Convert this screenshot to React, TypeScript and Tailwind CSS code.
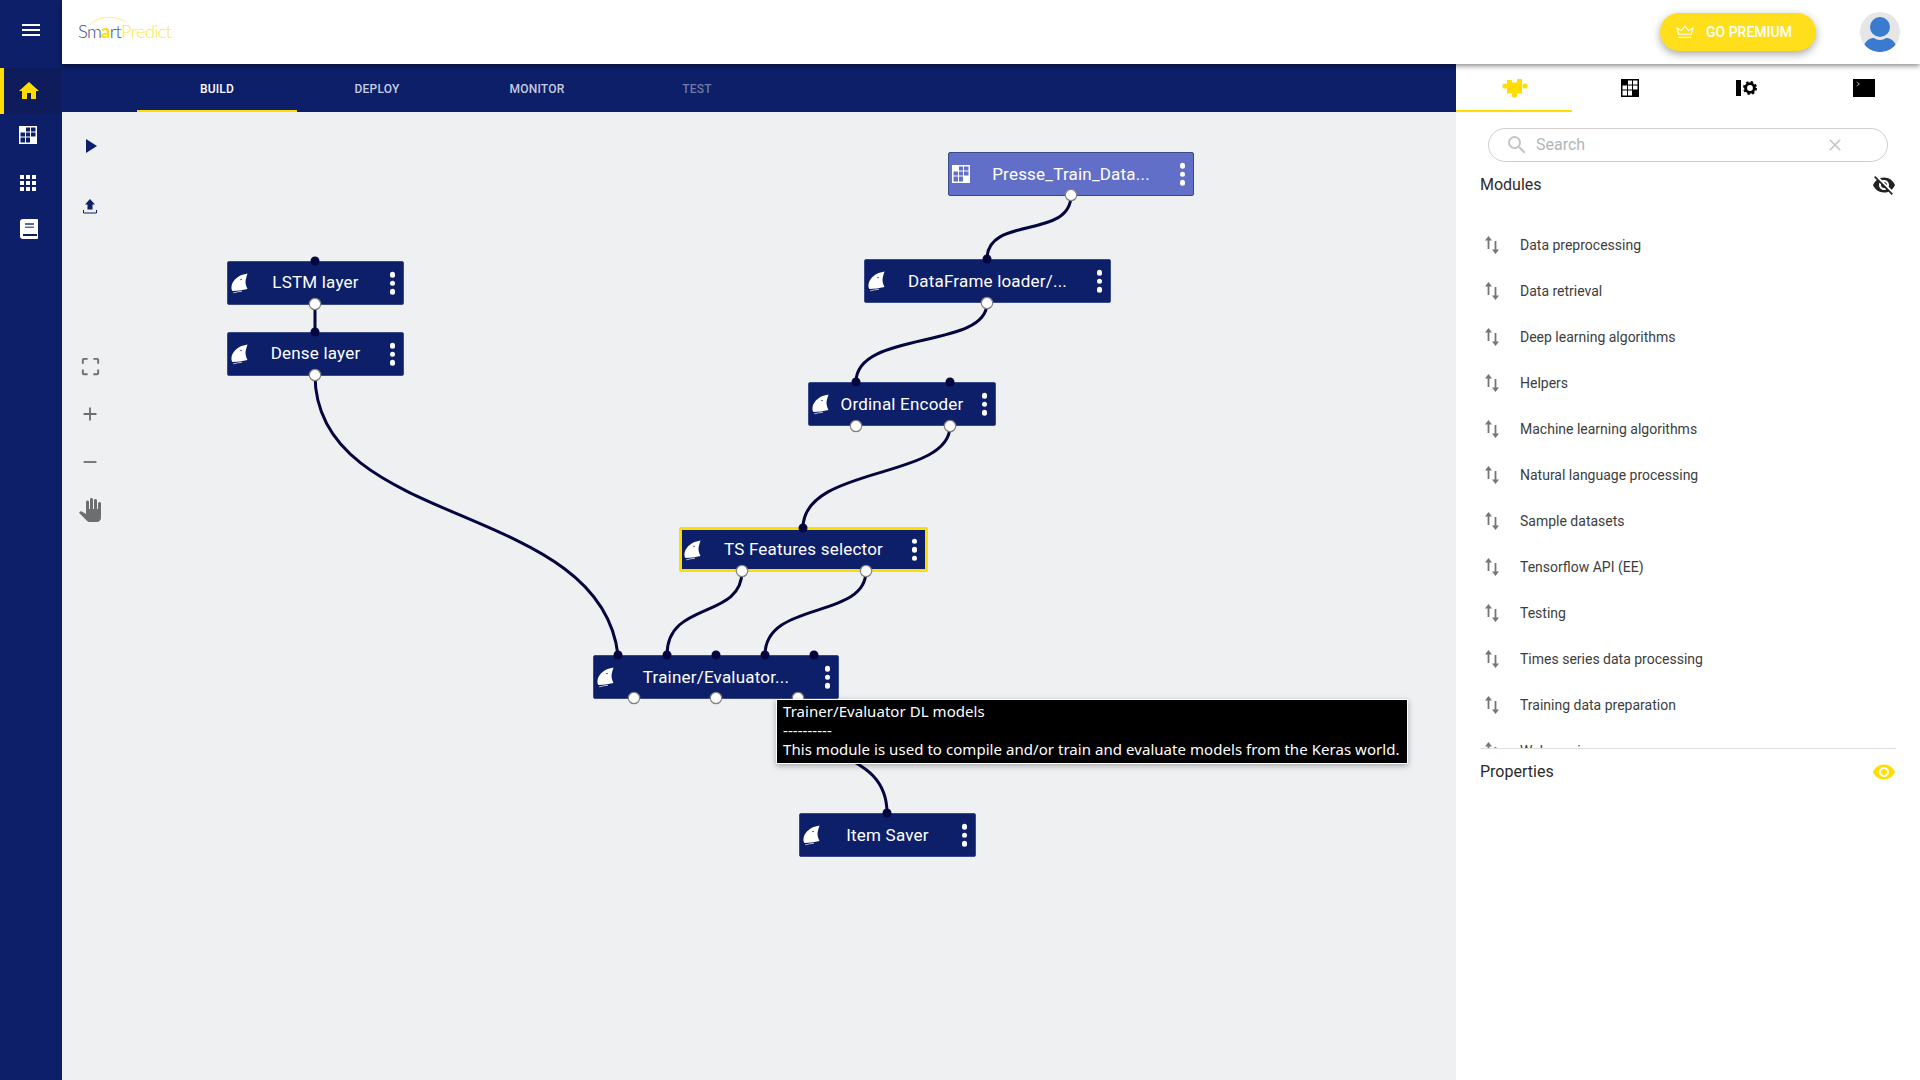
import React from "react";
import {
  MdMenu,
  MdHome,
  MdApps,
  MdPlayArrow,
  MdCropFree,
  MdAdd,
  MdRemove,
  MdPanTool,
  MdSearch,
  MdClose,
  MdVisibility,
  MdVisibilityOff,
} from "react-icons/md";

const modules = [
  "Data preprocessing",
  "Data retrieval",
  "Deep learning algorithms",
  "Helpers",
  "Machine learning algorithms",
  "Natural language processing",
  "Sample datasets",
  "Tensorflow API (EE)",
  "Testing",
  "Times series data processing",
  "Training data preparation",
  "Web services",
];

const nodes = [
  { label: "LSTM layer", pos: "left-[165px] top-[149px] w-[177px] h-[44px]" },
  { label: "Dense layer", pos: "left-[165px] top-[220px] w-[177px] h-[44px]" },
  { label: "Presse_Train_Data...", pos: "left-[886px] top-[40px] w-[246px] h-[44px] pt-[2px]", dataset: true },
  { label: "DataFrame loader/...", pos: "left-[802px] top-[147px] w-[247px] h-[44px] pt-[1px]" },
  { label: "Ordinal Encoder", pos: "left-[746px] top-[270px] w-[188px] h-[44px] pt-[2px]" },
  { label: "TS Features selector", pos: "left-[617px] top-[415px] w-[249px] h-[45px]", selected: true },
  { label: "Trainer/Evaluator...", pos: "left-[531px] top-[543px] w-[246px] h-[44px] pt-[2px]" },
  { label: "Item Saver", pos: "left-[737px] top-[701px] w-[177px] h-[44px] pt-[2px]" },
];

const edges = [
  "M315 304 L315 332",
  "M315 375 C315 530 600 500 618 655",
  "M1071 195 C1071 240 987 215 987 259",
  "M987 303 C987 350 856 330 856 382",
  "M950 426 C950 480 803 465 803 528",
  "M742 571 C742 620 667 600 667 655",
  "M866 571 C866 620 765 600 765 655",
  "M798 698 C798 765 887 745 887 813",
];

const inputs = [
  [315, 261], [315, 332], [987, 259], [856, 382], [950, 382], [803, 528],
  [618, 655], [667, 655], [716, 655], [765, 655], [814, 655], [887, 813],
];

const outputs = [
  [315, 304], [315, 375], [1071, 195], [987, 303], [856, 426], [950, 426],
  [742, 571], [866, 571], [634, 698], [716, 698], [798, 698],
];

function TableIcon({ className, cell }: { className?: string; cell: string }) {
  return (
    <svg viewBox="0 0 18 18" className={className}>
      <rect width="18" height="18" fill="currentColor" />
      <g fill={cell}>
        <rect x="7" y="1.5" width="4" height="4" />
        <rect x="12" y="1.5" width="4.5" height="4" />
        <rect x="1.5" y="6.5" width="4.5" height="4" />
        <rect x="7" y="6.5" width="4" height="4" />
        <rect x="12" y="6.5" width="4.5" height="4" />
        <rect x="1.5" y="11.5" width="4.5" height="5" />
        <rect x="7" y="11.5" width="4" height="5" />
      </g>
    </svg>
  );
}

function FinIcon() {
  return (
    <svg viewBox="0 0 17 21" className="w-[17px] h-[21px]">
      <path
        fill="#fff"
        d="M16.5 1 C14 2 11 2 8.5 3.5 C4 6 1 10 0.5 14 C0.3 16 0.6 17.5 1.5 18.5 C6 18.5 11.5 17.5 16.5 16.5 C15 13.5 14.2 10.5 14.6 8 C15 5.5 15.8 3.5 16.5 1 Z"
      />
      <circle cx="10" cy="7" r="0.7" fill="#0d1f69" />
      <path stroke="#fff" strokeWidth="0.7" fill="none" d="M2 20.5 C5 19.5 8 19 11 18.8" />
    </svg>
  );
}

function PuzzleIcon() {
  return (
    <svg viewBox="0 0 26 20" className="w-[26px] h-[20px]" fill="#ffdd00">
      <path d="M5 2 H10 V4.5 H15 V1 H20 V7 H5 Z" />
      <rect x="5" y="6" width="15" height="9.5" />
      <circle cx="3" cy="8" r="2.6" />
      <circle cx="23" cy="8" r="2.6" />
      <circle cx="12.5" cy="17" r="2.6" />
    </svg>
  );
}

function Kebab() {
  return (
    <div className="flex flex-col gap-[3px] absolute right-[8px] top-1/2 -translate-y-1/2">
      <span className="w-[5.5px] h-[5.5px] rounded-full bg-white" />
      <span className="w-[5.5px] h-[5.5px] rounded-full bg-white" />
      <span className="w-[5.5px] h-[5.5px] rounded-full bg-white" />
    </div>
  );
}

function SortIcon() {
  return (
    <svg viewBox="0 0 16 20" className="w-[16px] h-[20px] text-[#757575]" fill="currentColor">
      <path d="M4.5 1 L8 5.5 H5.4 V14 H3.6 V5.5 H1 Z" />
      <path d="M11.5 19 L15 14.5 H12.4 V6 H10.6 V14.5 H8 Z" />
    </svg>
  );
}

function Sidebar() {
  return (
    <aside className="w-[62px] shrink-0 bg-[#0d1f69] flex flex-col items-stretch text-white">
      <div className="h-[68px] flex items-center justify-center pb-2">
        <MdMenu className="w-[24px] h-[24px]" />
      </div>
      <div className="h-[46px] flex items-center justify-center bg-[#0e1c5c] border-l-4 border-[#ffdd00] pr-[8px]">
        <MdHome className="w-[24px] h-[24px] text-[#ffdd00]" />
      </div>
      <div className="h-[42px] flex items-center justify-center pr-[6px]">
        <TableIcon className="w-[18px] h-[18px] text-white" cell="#0d1f69" />
      </div>
      <div className="h-[54px] flex items-center justify-center pr-[6px]">
        <MdApps className="w-[24px] h-[24px]" />
      </div>
      <div className="h-[38px] flex items-center justify-center pr-[4px]">
        <svg viewBox="0 0 18 20" className="w-[18px] h-[20px]">
          <path fill="#fff" d="M3 0 H17 Q18 0 18 1 V19 Q18 20 17 20 H3 Q0 20 0 17 V3 Q0 0 3 0 Z" />
          <path fill="#5a6aa0" d="M5 4 H14 V6 H5 Z M5 7.5 H14 V9 H5 Z" />
          <path fill="#0d1f69" d="M3 15 H17 V17 H3 Z" />
        </svg>
      </div>
    </aside>
  );
}

function TopBar() {
  return (
    <header className="h-[64px] shrink-0 bg-white flex items-center justify-between relative z-10 shadow-[0_2px_5px_rgba(0,0,0,0.45)]">
      <div className="relative ml-[16px] font-['Lato',sans-serif] font-light text-[18.5px] leading-none tracking-[-0.75px] mt-[-1px]">
        <svg viewBox="0 0 44 10" className="absolute left-[12px] -top-[7px] w-[40px] h-[10px]">
          <path d="M1 9 C10 1 28 -1 40 8" fill="none" stroke="#ffe53b" strokeWidth="0.8" />
        </svg>
        <span className="text-[#3d4a85]">Sm</span>
        <span className="text-[#ffdd00] font-bold">a</span>
        <span className="text-[#3d4a85]">rt</span>
        <span className="text-[#ffe53b]">Predict</span>
      </div>
      <div className="flex items-center">
        <button className="w-[156px] h-[38px] mr-[44px] rounded-full bg-[#ffdf1b] text-white text-[14px] font-medium font-['Roboto',sans-serif] flex items-center pl-[16px] gap-[12px] shadow-[0_3px_8px_rgba(0,0,0,0.35)]">
          <svg viewBox="0 0 20 15" className="w-[18px] h-[14px]" fill="none" stroke="#fff" strokeWidth="1.2">
            <path d="M3 10 L1 3 L6 6 L10 1 L14 6 L19 3 L17 10 Z" />
            <path d="M3 13.5 H17" />
          </svg>
          GO PREMIUM
        </button>
        <div className="w-[40px] h-[40px] mr-[20px] rounded-full bg-[#e6e6e6] overflow-hidden">
          <svg viewBox="0 0 40 40" className="w-full h-full">
            <circle cx="20" cy="15" r="10" fill="#3a7bd0" />
            <path d="M4 33 C7 27 11 26 14 26 C17 28.5 23 28.5 26 26 C29 26 33 27 36 33 C32 38 26 40 20 40 C14 40 8 38 4 33 Z" fill="#3a7bd0" />
          </svg>
        </div>
      </div>
    </header>
  );
}

function TabBar() {
  const tabs = ["BUILD", "DEPLOY", "MONITOR", "TEST"];
  return (
    <nav className="h-[48px] shrink-0 bg-[#0d1f69] flex pl-[75px]">
      {tabs.map((t, i) => (
        <div
          key={t}
          className={`w-[160px] flex items-center justify-center text-[12px] font-medium tracking-[0.2px] ${
            i === 0
              ? "text-white border-b-2 border-[#ffdd00] pt-[3px]"
              : i === 3
              ? "text-[#6f7aa8] pt-[1px]"
              : "text-[#c6cbe0] pt-[1px]"
          }`}
        >
          {t}
        </div>
      ))}
    </nav>
  );
}

function Toolbar() {
  return (
    <div className="absolute left-0 top-0 w-[56px] flex flex-col items-center pt-[10px]">
      <div className="h-[48px] flex items-center justify-center">
        <MdPlayArrow className="w-[24px] h-[24px] text-[#0d1f69]" />
      </div>
      <div className="h-[48px] mt-[12px] flex items-center justify-center">
        <svg viewBox="0 0 16 16" className="w-[16px] h-[16px] -ml-[1px]">
          <path fill="#0d1f69" d="M8 1 L13 6.5 H10.5 V11.5 H5.5 V6.5 H3 Z" />
          <path fill="none" stroke="#0d1f69" strokeWidth="1" d="M1.5 12 V15 H14.5 V12" />
        </svg>
      </div>
      <div className="h-[48px] mt-[112px] flex items-center justify-center">
        <MdCropFree className="w-[23px] h-[23px] text-[#6e6e6e]" />
      </div>
      <div className="h-[48px] flex items-center justify-center">
        <MdAdd className="w-[22px] h-[22px] text-[#6e6e6e]" />
      </div>
      <div className="h-[48px] flex items-center justify-center">
        <MdRemove className="w-[22px] h-[22px] text-[#6e6e6e]" />
      </div>
      <div className="h-[48px] flex items-center justify-center">
        <MdPanTool className="w-[24px] h-[24px] text-[#6e6e6e]" />
      </div>
    </div>
  );
}

function Canvas() {
  return (
    <main className="relative flex-1 bg-[#eff0f2] overflow-hidden font-['Roboto',sans-serif]">
      <Toolbar />
      {nodes.map((n) => (
        <div
          key={n.label}
          className={`absolute ${n.pos} rounded-[2px] flex items-center justify-center text-white text-[17px] tracking-[0.2px] ${
            n.dataset ? "bg-[#626fc9]" : "bg-[#0d1f69]"
          } ${n.selected ? "border-[3px] border-[#ffdd00]" : "border border-[#3a4a88]"}`}
        >
          <div className={`absolute top-1/2 -translate-y-1/2 flex ${n.selected ? "left-[2px]" : "left-[3px]"}`}>
            {n.dataset ? <TableIcon className="w-[18px] h-[18px] text-white" cell="#626fc9" /> : <FinIcon />}
          </div>
          {n.label}
          <Kebab />
        </div>
      ))}
      <svg viewBox="62 112 1394 968" className="absolute inset-0 w-full h-full pointer-events-none">
        {edges.map((d) => (
          <path key={d} d={d} fill="none" stroke="#05053f" strokeWidth="3" />
        ))}
        {inputs.map(([x, y]) => (
          <circle key={`${x}-${y}`} cx={x} cy={y} r="4.5" fill="#05053f" />
        ))}
        {outputs.map(([x, y]) => (
          <circle key={`${x}-${y}`} cx={x} cy={y} r="5.7" fill="#fff" stroke="#808080" strokeWidth="1.2" />
        ))}
      </svg>
      <div className="absolute left-[714px] top-[587px] w-[632px] h-[65px] bg-black border border-white shadow-[0_2px_6px_rgba(0,0,0,0.3)] text-white text-[15px] leading-[19px] tracking-[0.05px] font-['Noto_Sans',sans-serif] px-[6px] pt-[2px] whitespace-nowrap">
        <div>Trainer/Evaluator DL models</div>
        <div>----------</div>
        <div>This module is used to compile and/or train and evaluate models from the Keras world.</div>
      </div>
    </main>
  );
}

function Panel() {
  return (
    <aside className="w-[464px] shrink-0 bg-white flex flex-col font-['Roboto',sans-serif]">
      <div className="h-[48px] shrink-0 grid grid-cols-4">
        <div className="flex items-center justify-center border-b-2 border-[#ffdd00] pt-[2px] pl-[2px]">
          <PuzzleIcon />
        </div>
        <div className="flex items-center justify-center">
          <TableIcon className="w-[20px] h-[18px] text-black" cell="#fff" />
        </div>
        <div className="flex items-center justify-center gap-[2px]">
          <span className="w-[5px] h-[16px] bg-black" />
          <svg viewBox="0 0 24 24" className="w-[14px] h-[14px]">
            <circle cx="12" cy="12" r="7.5" fill="none" stroke="#000" strokeWidth="5" />
            <circle cx="12" cy="12" r="10" fill="none" stroke="#000" strokeWidth="4" strokeDasharray="4 3.85" />
          </svg>
        </div>
        <div className="flex items-center justify-center pl-[4px]">
          <div className="w-[22px] h-[18px] bg-black relative">
            <svg viewBox="0 0 6 8" className="absolute left-[3px] top-[2px] w-[4px] h-[6px]">
              <path d="M1 1 L5 4 L1 7" fill="none" stroke="#ccc" strokeWidth="1.2" />
            </svg>
          </div>
        </div>
      </div>
      <div className="mt-[16px] ml-[32px] w-[400px] h-[34px] shrink-0 rounded-full border border-[#d3cdcd] flex items-center pl-[16px] pr-[42px] text-[16px] text-[#b5b5b5]">
        <MdSearch className="w-[24px] h-[24px] text-[#c4c4c4] mr-[7px]" />
        <span className="flex-1">Search</span>
        <MdClose className="w-[20px] h-[20px] text-[#c8c8c8]" />
      </div>
      <div className="h-[44px] shrink-0 flex items-center justify-between pl-[24px] pr-[24px] pt-[2px] text-[16px] text-[#2b2b2b]">
        Modules
        <MdVisibilityOff className="w-[24px] h-[24px] text-[#222]" />
      </div>
      <div className="mt-[16px] h-[526px] shrink-0 overflow-hidden">
        {modules.map((m) => (
          <div key={m} className="h-[46px] flex items-center pl-[28px] text-[14px] text-[#3d3d3d]">
            <SortIcon />
            <span className="ml-[20px]">{m}</span>
          </div>
        ))}
      </div>
      <div className="mx-[24px] border-t border-[#dedede] h-[46px] flex items-center justify-between text-[16px] text-[#2b2b2b]">
        Properties
        <MdVisibility className="w-[24px] h-[24px] text-[#ffdd00]" />
      </div>
    </aside>
  );
}

export default function App() {
  return (
    <div className="w-[1920px] h-[1080px] flex overflow-hidden font-['Roboto',sans-serif]">
      <Sidebar />
      <div className="flex-1 flex flex-col min-w-0">
        <TopBar />
        <div className="flex-1 flex min-h-0">
          <div className="flex-1 flex flex-col min-w-0">
            <TabBar />
            <Canvas />
          </div>
          <Panel />
        </div>
      </div>
    </div>
  );
}
